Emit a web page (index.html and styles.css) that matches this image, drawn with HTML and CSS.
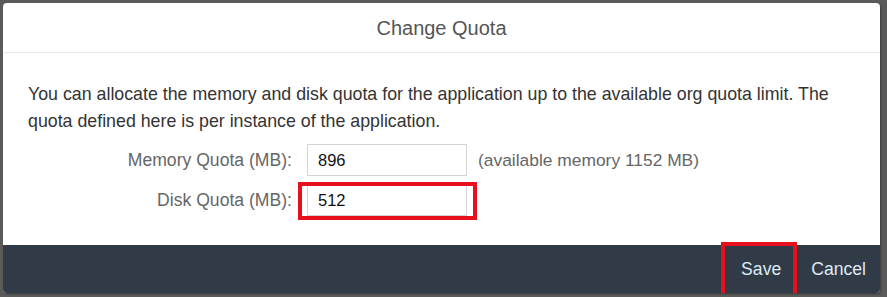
FILE: index.html
```html
<!DOCTYPE html>
<html>
<head>
<meta charset="utf-8">
<link rel="stylesheet" href="styles.css">
</head>
<body>
<div class="dialog">
  <div class="header">Change Quota</div>
  <div class="content">
    <p class="intro">You can allocate the memory and disk quota for the application up to the available org quota limit. The quota defined here is per instance of the application.</p>
    <div class="form">
      <div class="row">
        <label class="label">Memory Quota (MB):</label>
        <div class="field"><input class="input" type="text" value="896"></div>
        <span class="hint">(available memory 1152 MB)</span>
      </div>
      <div class="row">
        <label class="label">Disk Quota (MB):</label>
        <div class="field highlighted"><input class="input" type="text" value="512"><span class="mark mark-input"></span></div>
      </div>
    </div>
  </div>
  <div class="footer">
    <button class="btn btn-save">Save<span class="mark mark-btn"></span></button>
    <button class="btn btn-cancel">Cancel</button>
  </div>
</div>
</body>
</html>
```
FILE: styles.css
```css
html, body {
  margin: 0;
  padding: 0;
  background: #5a5a5a;
  font-family: "Liberation Sans", Arial, sans-serif;
}
body {
  padding: 3px 7px 4px 3px;
  height: 297px;
  box-sizing: border-box;
}
.dialog {
  width: 877px;
  height: 290px;
  background: #fff;
  border-radius: 4px;
  display: flex;
  flex-direction: column;
  overflow: hidden;
  box-shadow: 1px 1px 2px rgba(0,0,0,0.35);
}
.header {
  height: 48px;
  border-bottom: 1px solid #e8e8e8;
  display: flex;
  align-items: center;
  justify-content: center;
  font-size: 20px;
  color: #555;
  padding-top: 1px;
  box-sizing: content-box;
  flex: none;
}
.content {
  flex: 1;
  padding: 28px 20px 0 25px;
}
.intro {
  margin: 0;
  font-size: 17.8px;
  line-height: 27px;
  color: #333;
}
.form {
  margin-top: 9px;
  display: flex;
  flex-direction: column;
  gap: 9px;
}
.row {
  display: flex;
  align-items: center;
}
.label {
  width: 264px;
  text-align: right;
  font-size: 17.6px;
  color: #666;
  margin-right: 15px;
}
.field {
  position: relative;
  width: 160px;
  height: 32px;
}
.input {
  width: 160px;
  height: 32px;
  box-sizing: border-box;
  border: 1px solid #d4d4d4;
  padding: 0 10px;
  font-family: "Liberation Sans", Arial, sans-serif;
  font-size: 16.5px;
  color: #111;
  outline: none;
  margin: 0;
}
.highlighted {
  height: 31px;
}
.highlighted .input {
  height: 31px;
}
.hint {
  margin-left: 11px;
  font-size: 17.4px;
  color: #666;
}
.mark {
  position: absolute;
  border: 4px solid #e8101c;
  pointer-events: none;
}
.mark-input {
  left: -9px;
  right: -10px;
  top: -3px;
  bottom: -4px;
}
.footer {
  height: 48px;
  background: #303b47;
  display: flex;
  justify-content: flex-end;
  align-items: center;
  padding-right: 14px;
  flex: none;
}
.btn {
  position: relative;
  background: none;
  border: none;
  font-family: "Liberation Sans", Arial, sans-serif;
  font-size: 17.6px;
  color: #dfe8f2;
  padding: 0;
  margin: 0;
}
.btn-save {
  margin-right: 30px;
}
.mark-btn {
  left: -20px;
  right: -16px;
  top: -17px;
  bottom: -17px;
}
```
